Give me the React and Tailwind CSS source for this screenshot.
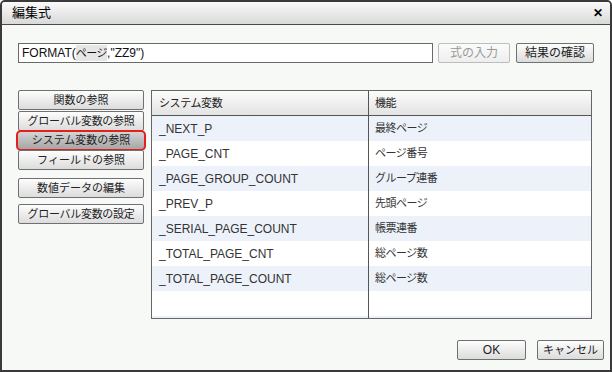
const rows = [
  ["_NEXT_P", "最終ページ"],
  ["_PAGE_CNT", "ページ番号"],
  ["_PAGE_GROUP_COUNT", "グループ連番"],
  ["_PREV_P", "先頭ページ"],
  ["_SERIAL_PAGE_COUNT", "帳票連番"],
  ["_TOTAL_PAGE_CNT", "総ページ数"],
  ["_TOTAL_PAGE_COUNT", "総ページ数"],
  ["", ""],
  ["", ""],
];

function Btn({ children, className = "", disabled = false }) {
  return (
    <button
      className={`h-[20px] flex items-center justify-center border rounded-[2px] leading-none bg-gradient-to-b ${
        disabled
          ? "border-[#bdbdbd] text-[#9a9a9a] from-[#fbfbfb] to-[#eeeeee]"
          : "border-[#707070] text-[#222] from-[#fdfdfd] to-[#dcdcdc]"
      } ${className}`}
    >
      {children}
    </button>
  );
}

export default function App() {
  return (
    <div
      className="w-[612px] h-[372px] flex flex-col border-2 border-[#3a3a3a] rounded-t-[5px] bg-[#f7f9f7] overflow-hidden text-[#222]"
      style={{ fontFamily: '"Liberation Sans", "Noto Sans CJK JP", sans-serif' }}
    >
      {/* Title bar */}
      <div className="h-[23px] shrink-0 flex items-center justify-between pl-[10px] pr-[7px] border-b border-[#4a4a4a] bg-gradient-to-b from-[#fafafa] to-[#d9d9d9]">
        <span className="text-[13px] text-black">編集式</span>
        <span className="text-[12px] font-bold text-black leading-none">✕</span>
      </div>

      {/* Expression row */}
      <div className="flex items-center pl-[16px] mt-[18px]">
        <div className="w-[415px] h-[20px] border border-[#6a6a6a] bg-white flex items-center pl-[3px] text-[12px] text-[#111]">
          FORMAT(<span className="bg-[#e6e6e6] text-[11px] tracking-[-0.5px]">ページ</span>,"ZZ9")
        </div>
        <Btn disabled className="w-[72px] ml-[5px] text-[12px]">式の入力</Btn>
        <Btn className="w-[78px] ml-[6px] text-[12px]">結果の確認</Btn>
      </div>

      {/* Main */}
      <div className="flex mt-[27px] pl-[16px]">
        <div className="w-[126px] flex flex-col text-[11px]">
          <Btn className="w-full">関数の参照</Btn>
          <Btn className="w-full mt-px tracking-[-0.3px]">グローバル変数の参照</Btn>
          <button className="w-[130px] -ml-[2px] h-[21px] -mt-px flex items-center justify-center border-2 border-[#e3201b] rounded-[5px] leading-none text-[#222] bg-gradient-to-b from-[#d4d4d4] to-[#a6a6a6]">
            システム変数の参照
          </button>
          <Btn className="w-full -mt-px">フィールドの参照</Btn>
          <Btn className="w-full mt-[8px]">数値データの編集</Btn>
          <Btn className="w-full mt-[6px] tracking-[-0.3px]">グローバル変数の設定</Btn>
        </div>

        <div className="ml-[7px] w-[441px] h-[229px] border border-[#666] bg-white flex flex-col overflow-hidden text-[12px]">
          <div className="h-[25px] shrink-0 flex border-b border-[#555] bg-gradient-to-b from-[#fcfcfc] to-[#e3e3e3] text-[11px] tracking-[-0.4px]">
            <div className="w-[217px] pl-[7px] flex items-center border-r border-[#555]">システム変数</div>
            <div className="flex-1 pl-[6px] flex items-center">機能</div>
          </div>
          <div className="flex-1 overflow-hidden">
            {rows.map(([name, desc], i) => (
              <div key={i} className={`h-[25px] flex ${i % 2 === 0 ? "bg-[#edf2fa]" : "bg-white"}`}>
                <div className="w-[217px] pl-[7px] flex items-center border-r border-[#555] text-[#333]">{name}</div>
                <div className="flex-1 pl-[6px] flex items-center text-[#333] text-[11px] tracking-[-0.5px]">{desc}</div>
              </div>
            ))}
          </div>
        </div>
      </div>

      {/* Footer */}
      <div className="flex justify-end mt-[21px] pr-[6px]">
        <Btn className="w-[69px] text-[12px]">OK</Btn>
        <Btn className="w-[67px] ml-[11px] text-[11px]">キャンセル</Btn>
      </div>
    </div>
  );
}
